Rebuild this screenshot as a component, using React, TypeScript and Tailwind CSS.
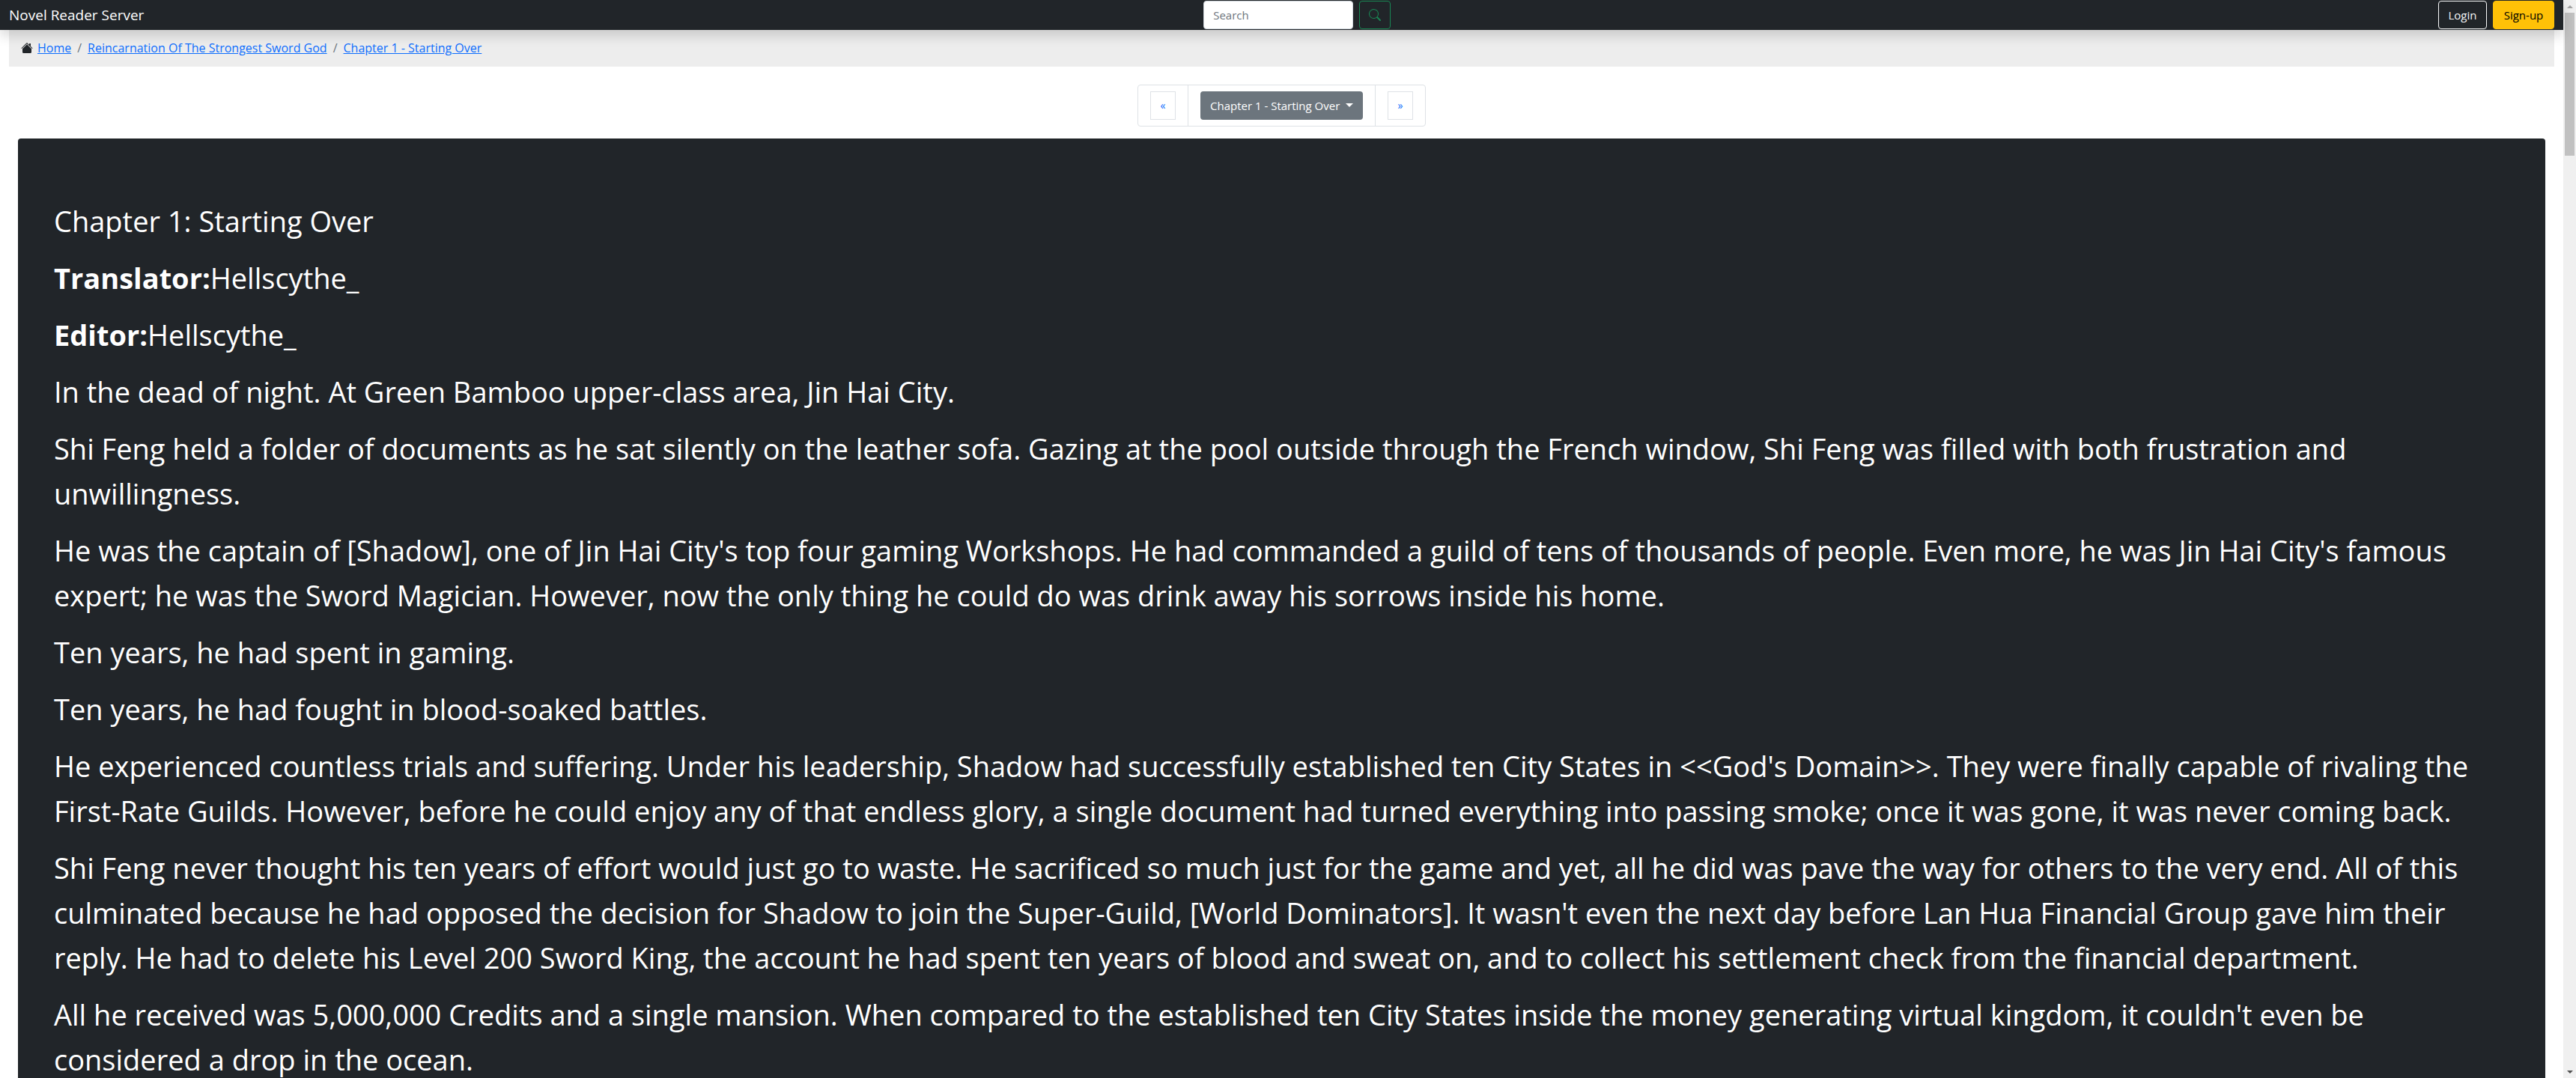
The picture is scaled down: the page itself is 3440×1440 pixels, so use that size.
import React from "react";

const crumbs = [
  "Home",
  "Reincarnation Of The Strongest Sword God",
  "Chapter 1 - Starting Over",
];

const paragraphs = [
  "In the dead of night. At Green Bamboo upper-class area, Jin Hai City.",
  "Shi Feng held a folder of documents as he sat silently on the leather sofa. Gazing at the pool outside through the French window, Shi Feng was filled with both frustration and unwillingness.",
  "He was the captain of [Shadow], one of Jin Hai City's top four gaming Workshops. He had commanded a guild of tens of thousands of people. Even more, he was Jin Hai City's famous expert; he was the Sword Magician. However, now the only thing he could do was drink away his sorrows inside his home.",
  "Ten years, he had spent in gaming.",
  "Ten years, he had fought in blood-soaked battles.",
  "He experienced countless trials and suffering. Under his leadership, Shadow had successfully established ten City States in <<God's Domain>>. They were finally capable of rivaling the First-Rate Guilds. However, before he could enjoy any of that endless glory, a single document had turned everything into passing smoke; once it was gone, it was never coming back.",
  "Shi Feng never thought his ten years of effort would just go to waste. He sacrificed so much just for the game and yet, all he did was pave the way for others to the very end. All of this culminated because he had opposed the decision for Shadow to join the Super-Guild, [World Dominators]. It wasn't even the next day before Lan Hua Financial Group gave him their reply. He had to delete his Level 200 Sword King, the account he had spent ten years of blood and sweat on, and to collect his settlement check from the financial department.",
  "All he received was 5,000,000 Credits and a single mansion. When compared to the established ten City States inside the money generating virtual kingdom, it couldn't even be considered a drop in the ocean.",
];

function HouseIcon() {
  return (
    <svg viewBox="0 0 16 16" className="size-4 fill-[#212529]" aria-hidden="true">
      <path fillRule="evenodd" d="m8 3.293 6 6V13.5a1.5 1.5 0 0 1-1.5 1.5h-9A1.5 1.5 0 0 1 2 13.5V9.293l6-6zm5-.793V6l-2-2V2.5a.5.5 0 0 1 .5-.5h1a.5.5 0 0 1 .5.5z" />
      <path fillRule="evenodd" d="M7.293 1.5a1 1 0 0 1 1.414 0l6.647 6.646a.5.5 0 0 1-.708.708L8 2.207 1.354 8.854a.5.5 0 1 1-.708-.708L7.293 1.5z" />
    </svg>
  );
}

function SearchIcon() {
  return (
    <svg viewBox="0 0 16 16" className="size-4 fill-current" aria-hidden="true">
      <path d="M11.742 10.344a6.5 6.5 0 1 0-1.397 1.398h-.001c.03.04.062.078.098.115l3.85 3.85a1 1 0 0 0 1.415-1.414l-3.85-3.85a1.007 1.007 0 0 0-.115-.1zM12 6.5a5.5 5.5 0 1 1-11 0 5.5 5.5 0 0 1 11 0z" />
    </svg>
  );
}

function Header() {
  return (
    <header className="relative z-10 flex h-10 shrink-0 items-center justify-between bg-[#212529] px-3 shadow-[0_8px_16px_rgba(0,0,0,0.15)]">
      <a href="#" className="text-[19px] text-white">Novel Reader Server</a>
      <form className="ml-4 flex gap-2" onSubmit={(e) => e.preventDefault()}>
        <input
          type="search"
          aria-label="Search"
          placeholder="Search"
          className="h-[38px] w-[200px] rounded border border-[#ced4da] bg-white px-3 text-[15px] text-[#212529] placeholder:text-[#6c757d]"
        />
        <button aria-label="Submit search" className="flex h-[38px] w-[42px] items-center justify-center rounded border border-[#198754] text-[#198754]">
          <SearchIcon />
        </button>
      </form>
      <div className="flex gap-2 text-[15px]">
        <button className="h-[38px] w-[65px] rounded border border-[#f8f9fa] text-[#f8f9fa]">Login</button>
        <button className="h-[38px] w-[82px] rounded border border-[#ffc107] bg-[#ffc107] text-black">Sign-up</button>
      </div>
    </header>
  );
}

function Breadcrumbs() {
  return (
    <nav aria-label="Breadcrumb" className="mx-3 h-[49px] bg-[#ededed] px-4 pt-3">
      <ol className="flex h-6 items-center text-base">
        {crumbs.map((label, i) => (
          <li key={label} className="flex items-center">
            {i === 0 ? (
              <span className="mr-1.5"><HouseIcon /></span>
            ) : (
              <span className="px-2 text-[#6c757d]">/</span>
            )}
            <a href="#" className="text-[#0d6efd] underline">{label}</a>
          </li>
        ))}
      </ol>
    </nav>
  );
}

function PageLink({ label, children }: { label: string; children: string }) {
  return (
    <a href="#" aria-label={label} className="flex h-[38px] w-[34px] items-center justify-center border border-[#dee2e6] text-sm text-[#0d6efd]">
      {children}
    </a>
  );
}

function ChapterPager() {
  return (
    <nav aria-label="Chapters" className="mt-6 mb-4 flex justify-center">
      <ul className="flex divide-x divide-[#dee2e6] rounded border border-[#dee2e6]">
        <li className="px-4 py-2"><PageLink label="Previous chapter">«</PageLink></li>
        <li className="px-4 py-2">
          <div className="relative">
            <select aria-label="Chapter" className="h-[38px] w-[217px] appearance-none rounded bg-[#6c757d] px-[13px] text-[15px] text-white">
              <option>Chapter 1 - Starting Over</option>
            </select>
            <span className="pointer-events-none absolute top-4 right-[13px] border-x-[5px] border-t-[5px] border-x-transparent border-t-white" />
          </div>
        </li>
        <li className="px-4 py-2"><PageLink label="Next chapter">»</PageLink></li>
      </ul>
    </nav>
  );
}

function Scrollbar() {
  return (
    <div aria-hidden="true" className="flex w-[17px] shrink-0 flex-col items-center bg-[#f0f0f0]">
      <div className="flex h-[17px] items-center">
        <span className="border-x-4 border-b-4 border-x-transparent border-b-[#a3a3a3]" />
      </div>
      <div className="h-[191px] w-[13px] bg-[#c1c1c1]" />
      <div className="mt-auto flex h-[17px] items-center">
        <span className="border-x-4 border-t-4 border-x-transparent border-t-[#505050]" />
      </div>
    </div>
  );
}

export default function App() {
  return (
    <div className="flex h-screen overflow-hidden bg-white font-['Segoe_UI','Open_Sans',sans-serif]">
      <div className="flex min-w-0 flex-1 flex-col">
        <Header />
        <main className="min-h-0 flex-1 overflow-hidden">
          <Breadcrumbs />
          <ChapterPager />
          <article className="mx-6 space-y-4 rounded bg-[#212529] px-12 pt-20 pb-12 text-[38px] leading-[60px] text-white">
            <p>Chapter 1: Starting Over</p>
            <p><strong>Translator:</strong>Hellscythe_</p>
            <p><strong>Editor:</strong>Hellscythe_</p>
            {paragraphs.map((text) => (
              <p key={text}>{text}</p>
            ))}
          </article>
        </main>
      </div>
      <Scrollbar />
    </div>
  );
}
